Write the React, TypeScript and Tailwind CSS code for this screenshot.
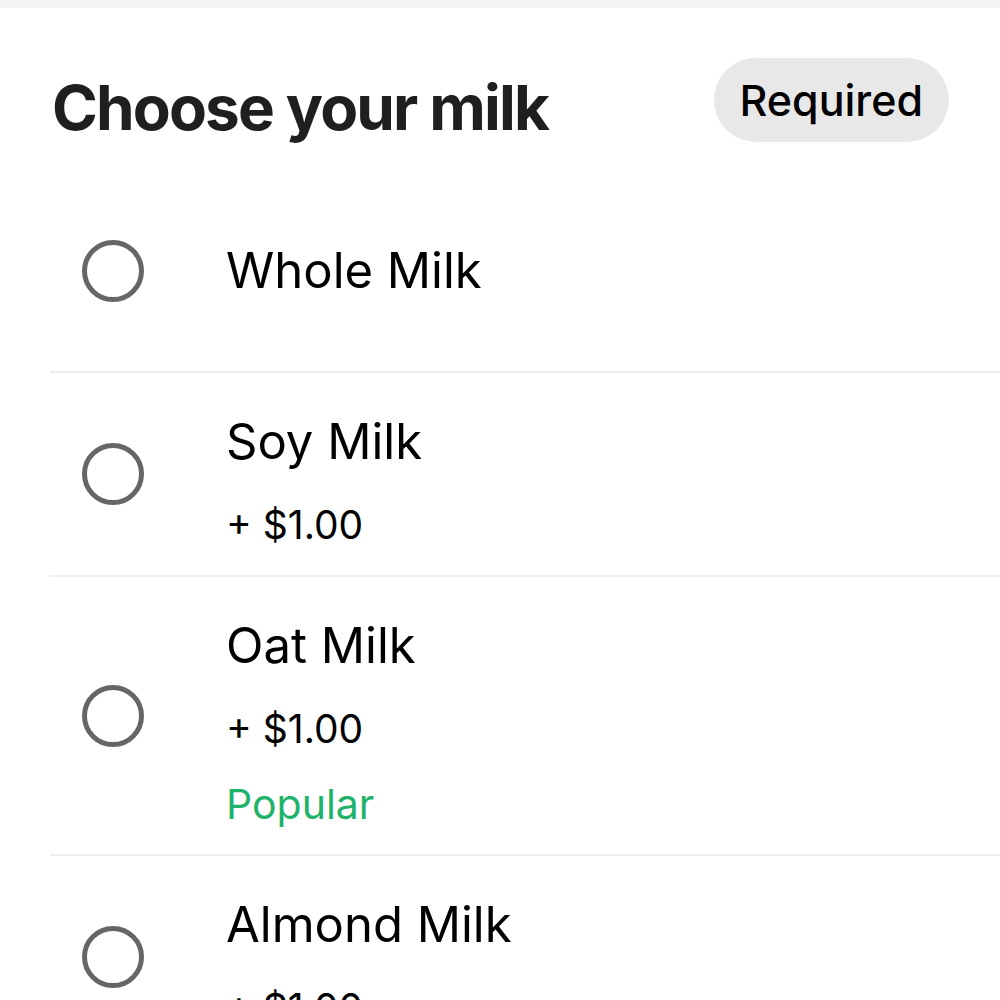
const options = [
  { name: "Whole Milk" },
  { name: "Soy Milk", price: "+ $1.00" },
  { name: "Oat Milk", price: "+ $1.00", tag: "Popular" },
  { name: "Almond Milk", price: "+ $1.00" },
];

function Radio() {
  return <div className="w-[62px] h-[62px] rounded-full border-[5px] border-[#666666] shrink-0" />;
}

export default function App() {
  return (
    <div className="w-[1000px] h-[1000px] overflow-hidden bg-white" style={{ fontFamily: "Inter, 'Noto Sans', sans-serif" }}>
      <div className="h-[8px] bg-[#f3f3f3]" />

      {/* Header */}
      <div className="h-[162px] pl-[52px] pr-[51px] pt-[50px] flex items-start justify-between">
        <h1 className="mt-[8px] text-[62px] leading-[84px] font-bold tracking-[-0.03em] text-[#1f1f1f]">Choose your milk</h1>
        <span className="h-[84px] px-[26px] rounded-full bg-[#e8e8e8] flex items-center text-[43px] font-medium text-black">
          Required
        </span>
      </div>

      {/* Options */}
      <div className="ml-[50px]">
        {options.map((o, i) => (
          <div
            key={o.name}
            className={`flex items-center ${i > 0 ? "border-t-2 border-[#eeeeee]" : ""} ${o.price ? "" : "h-[201px]"}`}
          >
            <div className="w-[176px] pl-[32px] shrink-0">
              <Radio />
            </div>
            <div className={`flex flex-col ${o.price ? "pt-[39px] pb-[24px]" : ""}`}>
              <span className="text-[49px] leading-[60px] text-black">{o.name}</span>
              {o.price && <span className="mt-[27px] text-[39px] leading-[52px] text-black">{o.price}</span>}
              {o.tag && <span className="mt-[23px] text-[41px] leading-[52px] text-[#1eb26b]">{o.tag}</span>}
            </div>
          </div>
        ))}
      </div>
    </div>
  );
}
